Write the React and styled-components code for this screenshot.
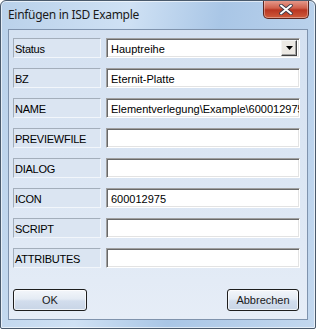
import React from "react";
import styled, { createGlobalStyle } from "styled-components";

const Global = createGlobalStyle`
  html, body { margin: 0; padding: 0; background: #ffffff; }
  * { box-sizing: border-box; }
`;

const Window = styled.div`
  width: 316px;
  height: 329px;
  border: 1px solid #4a5a6c;
  border-radius: 6px 6px 2px 2px;
  background: linear-gradient(100deg, #b9d1ea 0%, #cfe1f4 35%, #a9c6e6 60%, #c3d8ef 100%);
  box-shadow: inset 0 0 0 1px rgba(255,255,255,0.6);
  display: flex;
  flex-direction: column;
  overflow: hidden;
  font-family: "Liberation Sans", Arial, sans-serif;
`;

const TitleBar = styled.div`
  height: 28px;
  display: flex;
  align-items: flex-start;
  padding-left: 7px;
`;

const Title = styled.div`
  font-family: "Noto Sans", "Open Sans", sans-serif;
  font-size: 12px;
  color: #1a1a1a;
  margin-top: 5px;
  letter-spacing: -0.3px;
  flex: 1;
`;

const CloseButton = styled.div`
  width: 46px;
  height: 19px;
  margin-right: 6px;
  margin-top: -1px;
  border: 1px solid #5b2620;
  border-top: none;
  border-radius: 0 0 5px 5px;
  background: linear-gradient(#e8a093 0%, #d0604c 45%, #b93622 55%, #cf5b3c 100%);
  box-shadow: inset 0 0 0 1px rgba(255,255,255,0.35);
  display: flex;
  align-items: center;
  justify-content: center;
`;

const Client = styled.div`
  margin: 0 7px 8px 7px;
  flex: 1;
  border: 1px solid #7f93ad;
  background: linear-gradient(#d4e1f1 0%, #dde7f4 60%, #e6edf7 100%);
  padding: 8px 7px 8px 4px;
  display: flex;
  flex-direction: column;
`;

const Form = styled.div`
  display: grid;
  grid-template-columns: 88px 1fr;
  column-gap: 5px;
  row-gap: 10px;
`;

const Label = styled.div`
  height: 20px;
  border-top: 1px solid #a3aebb;
  border-left: 1px solid #a3aebb;
  border-right: 1px solid #f2f6fb;
  border-bottom: 1px solid #f2f6fb;
  background: #dbe5f2;
  font-size: 11px;
  letter-spacing: -0.25px;
  color: #000;
  display: flex;
  align-items: center;
  padding-left: 1px;
  padding-top: 1px;
  white-space: nowrap;
`;

const Field = styled.div`
  height: 20px;
  border-top: 1px solid #a0a0a0;
  border-left: 1px solid #a0a0a0;
  border-right: 1px solid #ffffff;
  border-bottom: 1px solid #ffffff;
  background: #ffffff;
  box-shadow: inset 1px 1px 0 #696969, inset -1px -1px 0 #e3e3e3;
  font-size: 11px;
  color: #000;
  display: flex;
  align-items: center;
  padding-left: 4px;
  padding-top: 1px;
  white-space: nowrap;
  overflow: hidden;
`;

const FieldText = styled.span`
  flex: 1;
  overflow: hidden;
`;

const DropButton = styled.div`
  width: 16px;
  height: 16px;
  margin-right: 2px;
  margin-top: -1px;
  background: #ece9e4;
  border-top: 1px solid #f4f4f4;
  border-left: 1px solid #f4f4f4;
  border-right: 1px solid #404040;
  border-bottom: 1px solid #404040;
  box-shadow: inset -1px -1px 0 #a0a0a0;
  display: flex;
  align-items: center;
  justify-content: center;
  flex: none;
`;

const Buttons = styled.div`
  margin-top: auto;
  display: flex;
  justify-content: space-between;
  padding-right: 1px;
`;

const Button = styled.div`
  width: ${(p) => p.$w}px;
  height: 22px;
  border: 1px solid #1e1e1e;
  border-radius: 3px;
  background: linear-gradient(#f3f6fa 0%, #e4ebf4 45%, #d2dded 55%, #c8d5e6 100%);
  box-shadow: inset 0 0 0 1px rgba(255,255,255,0.7);
  font-family: "Liberation Sans", Arial, sans-serif;
  font-size: 11px;
  color: #1a1a1a;
  display: flex;
  align-items: center;
  justify-content: center;
`;

const rows = [
  { label: "Status", value: "Hauptreihe", combo: true },
  { label: "BZ", value: "Eternit-Platte" },
  { label: "NAME", value: "Elementverlegung\\Example\\600012975" },
  { label: "PREVIEWFILE", value: "" },
  { label: "DIALOG", value: "" },
  { label: "ICON", value: "600012975" },
  { label: "SCRIPT", value: "" },
  { label: "ATTRIBUTES", value: "" },
];

export default function App() {
  return (
    <>
      <Global />
      <Window>
        <TitleBar>
          <Title>Einfügen in ISD Example</Title>
          <CloseButton>
            <svg width="14" height="11" viewBox="0 0 14 11">
              <path d="M2 1.5 L12 9.5 M12 1.5 L2 9.5" stroke="#3a3a4a" strokeWidth="3.6" strokeLinecap="round" />
              <path d="M2 1.5 L12 9.5 M12 1.5 L2 9.5" stroke="#ffffff" strokeWidth="2" strokeLinecap="round" />
            </svg>
          </CloseButton>
        </TitleBar>
        <Client>
          <Form>
            {rows.map((r) => (
              <React.Fragment key={r.label}>
                <Label>{r.label}</Label>
                <Field>
                  <FieldText>{r.value}</FieldText>
                  {r.combo && (
                    <DropButton>
                      <svg width="7" height="4" viewBox="0 0 7 4">
                        <path d="M0 0 H7 L3.5 4 Z" fill="#000" />
                      </svg>
                    </DropButton>
                  )}
                </Field>
              </React.Fragment>
            ))}
          </Form>
          <Buttons>
            <Button $w={74}>OK</Button>
            <Button $w={72}>Abbrechen</Button>
          </Buttons>
        </Client>
      </Window>
    </>
  );
}
